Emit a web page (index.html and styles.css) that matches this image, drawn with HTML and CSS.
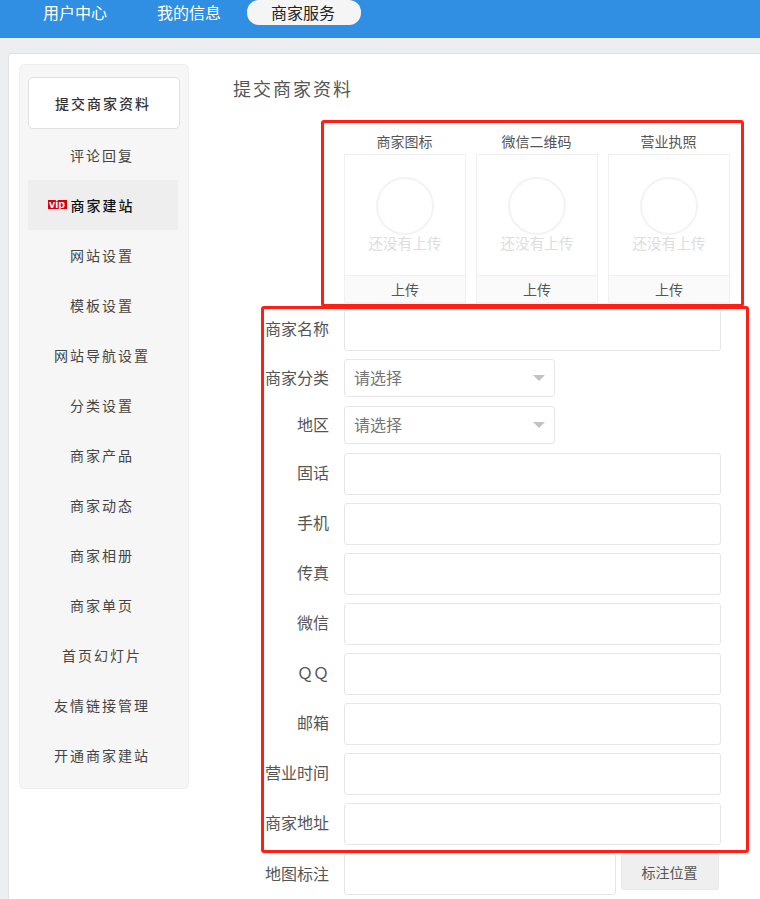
FILE: index.html
```html
<!DOCTYPE html>
<html lang="zh-CN">
<head>
<meta charset="utf-8">
<title>提交商家资料</title>
<link rel="stylesheet" href="styles.css">
</head>
<body>
<header class="topbar">
  <nav class="topnav">
    <a class="topnav-item">用户中心</a>
    <a class="topnav-item">我的信息</a>
    <a class="topnav-item is-active">商家服务</a>
  </nav>
</header>
<main class="panel">
  <aside class="sidebar">
    <a class="side-item side-first">提交商家资料</a>
    <a class="side-item">评论回复</a>
    <a class="side-item side-vip"><span class="vip">vip</span>商家建站</a>
    <a class="side-item">网站设置</a>
    <a class="side-item">模板设置</a>
    <a class="side-item">网站导航设置</a>
    <a class="side-item">分类设置</a>
    <a class="side-item">商家产品</a>
    <a class="side-item">商家动态</a>
    <a class="side-item">商家相册</a>
    <a class="side-item">商家单页</a>
    <a class="side-item">首页幻灯片</a>
    <a class="side-item">友情链接管理</a>
    <a class="side-item">开通商家建站</a>
  </aside>
  <section class="content">
    <h1 class="title">提交商家资料</h1>
    <div class="uploads">
      <div class="upload">
        <div class="upload-name">商家图标</div>
        <div class="upload-card">
          <div class="upload-view"><span class="ring"></span><span class="empty">还没有上传</span></div>
          <div class="upload-btn">上传</div>
        </div>
      </div>
      <div class="upload">
        <div class="upload-name">微信二维码</div>
        <div class="upload-card">
          <div class="upload-view"><span class="ring"></span><span class="empty">还没有上传</span></div>
          <div class="upload-btn">上传</div>
        </div>
      </div>
      <div class="upload">
        <div class="upload-name">营业执照</div>
        <div class="upload-card">
          <div class="upload-view"><span class="ring"></span><span class="empty">还没有上传</span></div>
          <div class="upload-btn">上传</div>
        </div>
      </div>
    </div>
    <form class="form">
      <div class="row"><label class="label">商家名称</label><input class="input" type="text"></div>
      <div class="row row-select"><label class="label">商家分类</label><div class="select">请选择<span class="caret"></span></div></div>
      <div class="row row-select"><label class="label">地区</label><div class="select">请选择<span class="caret"></span></div></div>
      <div class="row"><label class="label">固话</label><input class="input" type="text"></div>
      <div class="row"><label class="label">手机</label><input class="input" type="text"></div>
      <div class="row"><label class="label">传真</label><input class="input" type="text"></div>
      <div class="row"><label class="label">微信</label><input class="input" type="text"></div>
      <div class="row"><label class="label">ＱＱ</label><input class="input" type="text"></div>
      <div class="row"><label class="label">邮箱</label><input class="input" type="text"></div>
      <div class="row"><label class="label">营业时间</label><input class="input" type="text"></div>
      <div class="row"><label class="label">商家地址</label><input class="input" type="text"></div>
      <div class="row row-map"><label class="label">地图标注</label><input class="input input-map" type="text"><button class="map-btn" type="button">标注位置</button></div>
    </form>
  </section>
  <div class="mark mark-uploads"></div>
  <div class="mark mark-fields"></div>
</main>
</body>
</html>
```
FILE: styles.css
```css
* { box-sizing: border-box; }
html, body { margin: 0; height: 899px; overflow: hidden; }
body {
  background: #edeef0;
  font-family: "Noto Sans CJK SC", "Liberation Sans", sans-serif;
  font-size: 14px;
  color: #555;
}
.topbar { height: 38px; background: #308ee3; }
.topnav { display: flex; padding-left: 18px; }
.topnav-item {
  width: 114px;
  height: 25px;
  line-height: 24px;
  text-align: center;
  font-size: 16px;
  color: #fff;
}
.topnav-item.is-active {
  margin-left: 1px;
  padding-right: 2px;
  background: #f5f5f5;
  color: #222;
  border-radius: 12px;
}

.panel {
  position: relative;
  display: flex;
  align-items: flex-start;
  height: 846px;
  margin: 15px 0 0 8px;
  padding: 10px 0 0 10px;
  background: #fff;
  border: 1px solid #e2e2e2;
  border-width: 1px 0 0 1px;
  border-radius: 3px 0 0 0;
}

.sidebar {
  flex: none;
  width: 170px;
  height: 725px;
  padding: 12px 0 0 8px;
  background: #f6f6f6;
  border: 1px solid #eee;
  border-radius: 5px;
}
.side-item {
  display: flex;
  align-items: center;
  justify-content: center;
  width: 150px;
  height: 50px;
  padding-right: 2px;
  font-size: 14px;
  letter-spacing: 2px;
  color: #444;
}
.side-first {
  width: 152px;
  height: 52px;
  margin-bottom: 1px;
  padding: 0 2px 1px 0;
  background: #fff;
  border: 1px solid #e0e0e0;
  border-radius: 5px;
  font-weight: 500;
  color: #333;
}
.side-vip { background: #eee; color: #111; font-weight: 500; padding-right: 24px; }
.vip {
  flex: none;
  width: 19px;
  height: 9px;
  margin-right: 4px;
  margin-bottom: 1px;
  background: #d9000a;
  color: #fff;
  font: 700 11px/8px "Liberation Sans", sans-serif;
  letter-spacing: 0;
  text-align: center;
}

.content { flex: none; width: 497px; margin-left: 44px; margin-top: 2px; }
.title {
  margin: 10px 0 0;
  height: 24px;
  line-height: 24px;
  font-size: 18px;
  font-weight: 400;
  letter-spacing: 2px;
  color: #555;
}
.uploads { display: flex; gap: 10px; margin-top: 30px; padding-left: 111px; }
.upload { width: 122px; }
.upload-name { height: 24px; line-height: 22px; padding-right: 1px; text-align: center; font-size: 14px; color: #555; }
.upload-card { height: 149px; border: 1px solid #f0f0f0; }
.upload-view {
  display: flex;
  flex-direction: column;
  align-items: center;
  height: 120px;
  padding-top: 22px;
}
.ring { width: 58px; height: 58px; border: 2px solid #f3f3f3; border-radius: 50%; }
.empty { height: 16px; line-height: 16px; font-size: 14.6px; color: #ddd; }
.upload-btn {
  height: 27px;
  line-height: 27px;
  text-align: center;
  background: #fafafa;
  border-top: 1px solid #f0f0f0;
  color: #555;
}

.form { margin-top: 6px; }
.row { display: flex; align-items: center; gap: 15px; margin-bottom: 8px; }
.label { width: 96px; flex: none; padding: 0 0 4px 0; text-align: right; font-size: 16px; color: #555; }
.input {
  display: block;
  width: 377px;
  height: 42px;
  margin: 0;
  padding: 0 10px;
  background: #fff;
  border: 1px solid #e6e6e6;
  border-radius: 3px;
}
.row-select { margin-bottom: 9px; }
.row-select .label { padding-bottom: 2px; }
.select {
  position: relative;
  width: 211px;
  height: 38px;
  padding-left: 9px;
  line-height: 35px;
  font-size: 16px;
  color: #757575;
  background: #fff;
  border: 1px solid #e6e6e6;
  border-radius: 3px;
}
.caret {
  position: absolute;
  top: 15px;
  right: 9px;
  border-style: solid;
  border-width: 6px 6px 0;
  border-color: #c2c2c2 transparent transparent;
}
.row-map { align-items: flex-start; gap: 5px; margin-bottom: 0; }
.row-map .label { margin-right: 10px; line-height: 40px; }
.input-map { width: 272px; }
.map-btn {
  width: 98px;
  height: 37px;
  padding: 0 1px 0 0;
  background: #efefef;
  border: 1px solid #e8e8e8;
  border-radius: 3px;
  font-family: inherit;
  font-size: 14px;
  color: #555;
}

.mark { position: absolute; border: 3px solid #ff2015; border-radius: 3px; pointer-events: none; }
.mark-uploads { left: 312px; top: 66px; width: 423px; height: 187px; }
.mark-fields { left: 252px; top: 252px; width: 488px; height: 547px; }
```
